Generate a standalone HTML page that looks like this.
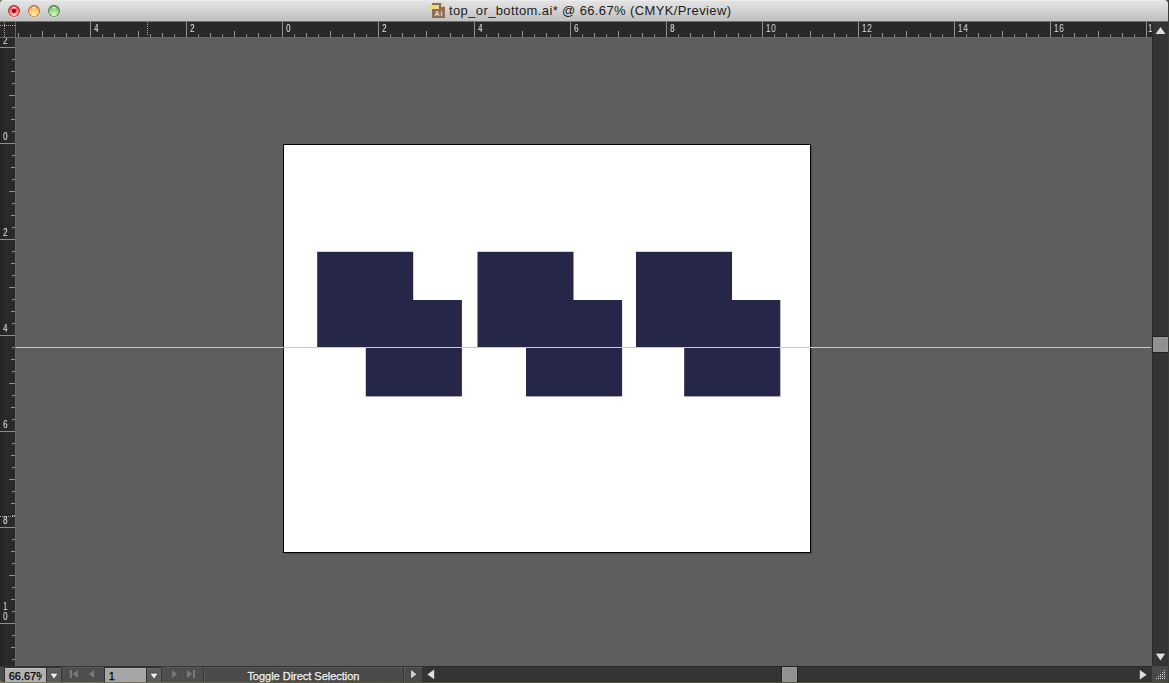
<!DOCTYPE html>
<html><head><meta charset="utf-8"><title>top_or_bottom.ai</title>
<style>
html,body{margin:0;padding:0;}
body{width:1169px;height:683px;overflow:hidden;position:relative;background:linear-gradient(90deg,#7a7a5e 0,#66654c 200px,#555340 430px,#555340 1167px,#3e3e34 1168px);font-family:"Liberation Sans",sans-serif;}
#win{position:absolute;left:0;top:0;width:1168px;height:682px;overflow:hidden;border-radius:4px 4px 4px 4px;background:#5e5e5e;}
#win div,#win span,#win svg{position:absolute;}
#title{left:0;top:0;width:1168px;height:21px;background:linear-gradient(#f2f2f2 0,#e3e3e3 1px,#d7d7d7 9px,#c9c9c9 15px,#c1c1c1 20px,#c6c6c6 21px);border-bottom:1px solid #6e6e6e;}
.tl{width:12px;height:12px;border-radius:50%;top:5px;box-sizing:border-box;}
#ttext{left:449px;top:3px;height:16px;line-height:16px;font-size:13px;color:#1c1c1c;white-space:nowrap;letter-spacing:0.38px;}
#hruler{left:0;top:22px;width:1152px;height:15px;background:#292929;overflow:hidden;}
#hline{left:0;top:37px;width:1152px;height:1px;background:#686868;}
#vruler{left:0;top:38px;width:15px;height:628px;background:linear-gradient(90deg,#242424 0,#292929 5px);overflow:hidden;}
#vline{left:15px;top:22px;width:1px;height:644px;background:#686868;}
.hl,.vl{color:#e4e4e4;font-size:10.5px;line-height:10px;height:10px;transform-origin:0 0;transform:scaleX(.78);will-change:transform;letter-spacing:1px;}
.hl{top:1px;}
.vl{left:2.7px;}
#canvas{left:16px;top:38px;width:1136px;height:628px;background:#5e5e5e;overflow:hidden;}
#art{left:267px;top:106px;width:526px;height:407px;background:#fff;border:1px solid #000;box-shadow:1px 1px 0 #4e4e4e,2px 2px 0 #595959;}
#guide{left:0;top:309px;width:1135px;height:1px;background:#4cfcff;}
#vsb{left:1153px;top:22px;width:15px;height:644px;background:#343434;box-shadow:-1px 0 0 #2a2a2a;}
#hsb{left:422px;top:667px;width:730px;height:15px;background:#343434;box-shadow:0 -1px 0 #2a2a2a,inset 0 -1px 0 #2e2e2e;}
#bar{left:0;top:666px;width:422px;height:16px;background:linear-gradient(#333 0,#333 1px,#4a4a4a 1px);}
.thumb{background:#919191;box-sizing:border-box;border:1px solid #989898;box-shadow:0 0 0 1px #222;}
.fld{top:2px;height:14px;background:linear-gradient(#c2c2c2 0,#c2c2c2 1px,#b2b2b2 1px,#b0b0b0);box-shadow:0 0 0 1px #303030;}
.fld i{position:absolute;display:block;font-style:normal;left:0;top:0;width:36.5px;height:14px;overflow:hidden;}
.fld span{left:3.7px;top:2px;font-size:11px;line-height:12px;color:#000;-webkit-text-stroke:0.25px #000;white-space:nowrap;}
.dd{top:2px;height:14px;width:14px;background:#5c5c5c;box-shadow:inset 0 1px 0 #686868,0 0 0 1px #303030;}
.nav{top:1px;height:15px;background:#4e4e4e;box-shadow:inset 0 1px 0 #585858,0 0 0 1px #383838;}
#status{left:205px;top:1px;width:198px;height:15px;}
#status span{left:42.4px;top:3px;font-size:11px;line-height:12px;color:#f0f0f0;white-space:nowrap;text-shadow:0 -1px 0 #222;letter-spacing:-0.02px;-webkit-text-stroke:0.3px #f0f0f0;}
#grip{left:1152px;top:666px;width:16px;height:16px;background:#4a4a4a;}
</style></head><body>
<div id="win">
 <div id="title">
  <div class="tl" style="left:8px;background:radial-gradient(ellipse 3.6px 1.6px at 50% 22%,rgba(255,255,255,.8),rgba(255,255,255,0)),radial-gradient(circle at 50% 80%,#ffd4d4 0,#ff8c8c 32%,#fa5a5a 58%,#d84444 90%);box-shadow:inset 0 0 0 .8px #a83434,inset 0 1px 1px #7c1c1c,0 .6px .8px rgba(255,255,255,.7);"></div>
  <div style="left:12px;top:9px;width:4px;height:4px;border-radius:50%;background:#a00808;box-shadow:0 0 1px #c01010;"></div>
  <div class="tl" style="left:28px;background:radial-gradient(ellipse 3.6px 1.6px at 50% 22%,rgba(255,255,255,.8),rgba(255,255,255,0)),radial-gradient(circle at 50% 80%,#fff0b4 0,#fdd47c 32%,#f6b45c 58%,#dc9844 90%);box-shadow:inset 0 0 0 .8px #a8702a,inset 0 1px 1px #7c4c14,0 .6px .8px rgba(255,255,255,.7);"></div>
  <div class="tl" style="left:48px;background:radial-gradient(ellipse 3.6px 1.6px at 50% 22%,rgba(255,255,255,.8),rgba(255,255,255,0)),radial-gradient(circle at 50% 80%,#d8f4c4 0,#acde98 32%,#86c876 58%,#68aa5a 90%);box-shadow:inset 0 0 0 .8px #447e3a,inset 0 1px 1px #28581e,0 .6px .8px rgba(255,255,255,.7);"></div>
  <svg style="left:429px;top:3px" width="17" height="16" viewBox="0 0 17 16">
   <path d="M3 0h9l4 4v11H3z" fill="#8b6e5c"/>
   <path d="M12 0l4 4h-4z" fill="#ead09a"/>
   <rect x="0" y="2" width="10" height="4" fill="#f1d87e"/>
   <text x="5.5" y="13" font-family="Liberation Sans, sans-serif" font-size="7" font-weight="bold" letter-spacing="0.9" fill="#f5dfa8">Ai</text>
  </svg>
  <span id="ttext">top_or_bottom.ai* @ 66.67% (CMYK/Preview)</span>
 </div>
 <div id="hruler">
  <svg width="1152" height="15" style="left:0;top:0" fill="#8e8e8e" shape-rendering="crispEdges"><rect x="18" y="11" width="1" height="4"/><rect x="30" y="12" width="1" height="3"/><rect x="42" y="9" width="1" height="6"/><rect x="54" y="12" width="1" height="3"/><rect x="66" y="11" width="1" height="4"/><rect x="78" y="12" width="1" height="3"/><rect x="90" y="0" width="1" height="15"/><rect x="102" y="12" width="1" height="3"/><rect x="114" y="11" width="1" height="4"/><rect x="126" y="12" width="1" height="3"/><rect x="138" y="9" width="1" height="6"/><rect x="150" y="12" width="1" height="3"/><rect x="162" y="11" width="1" height="4"/><rect x="174" y="12" width="1" height="3"/><rect x="186" y="0" width="1" height="15"/><rect x="198" y="12" width="1" height="3"/><rect x="210" y="11" width="1" height="4"/><rect x="222" y="12" width="1" height="3"/><rect x="234" y="9" width="1" height="6"/><rect x="246" y="12" width="1" height="3"/><rect x="258" y="11" width="1" height="4"/><rect x="270" y="12" width="1" height="3"/><rect x="282" y="0" width="1" height="15"/><rect x="294" y="12" width="1" height="3"/><rect x="306" y="11" width="1" height="4"/><rect x="318" y="12" width="1" height="3"/><rect x="330" y="9" width="1" height="6"/><rect x="342" y="12" width="1" height="3"/><rect x="354" y="11" width="1" height="4"/><rect x="366" y="12" width="1" height="3"/><rect x="378" y="0" width="1" height="15"/><rect x="390" y="12" width="1" height="3"/><rect x="402" y="11" width="1" height="4"/><rect x="414" y="12" width="1" height="3"/><rect x="426" y="9" width="1" height="6"/><rect x="438" y="12" width="1" height="3"/><rect x="450" y="11" width="1" height="4"/><rect x="462" y="12" width="1" height="3"/><rect x="474" y="0" width="1" height="15"/><rect x="486" y="12" width="1" height="3"/><rect x="498" y="11" width="1" height="4"/><rect x="510" y="12" width="1" height="3"/><rect x="522" y="9" width="1" height="6"/><rect x="534" y="12" width="1" height="3"/><rect x="546" y="11" width="1" height="4"/><rect x="558" y="12" width="1" height="3"/><rect x="570" y="0" width="1" height="15"/><rect x="582" y="12" width="1" height="3"/><rect x="594" y="11" width="1" height="4"/><rect x="606" y="12" width="1" height="3"/><rect x="618" y="9" width="1" height="6"/><rect x="630" y="12" width="1" height="3"/><rect x="642" y="11" width="1" height="4"/><rect x="654" y="12" width="1" height="3"/><rect x="666" y="0" width="1" height="15"/><rect x="678" y="12" width="1" height="3"/><rect x="690" y="11" width="1" height="4"/><rect x="702" y="12" width="1" height="3"/><rect x="714" y="9" width="1" height="6"/><rect x="726" y="12" width="1" height="3"/><rect x="738" y="11" width="1" height="4"/><rect x="750" y="12" width="1" height="3"/><rect x="762" y="0" width="1" height="15"/><rect x="774" y="12" width="1" height="3"/><rect x="786" y="11" width="1" height="4"/><rect x="798" y="12" width="1" height="3"/><rect x="810" y="9" width="1" height="6"/><rect x="822" y="12" width="1" height="3"/><rect x="834" y="11" width="1" height="4"/><rect x="846" y="12" width="1" height="3"/><rect x="858" y="0" width="1" height="15"/><rect x="870" y="12" width="1" height="3"/><rect x="882" y="11" width="1" height="4"/><rect x="894" y="12" width="1" height="3"/><rect x="906" y="9" width="1" height="6"/><rect x="918" y="12" width="1" height="3"/><rect x="930" y="11" width="1" height="4"/><rect x="942" y="12" width="1" height="3"/><rect x="954" y="0" width="1" height="15"/><rect x="966" y="12" width="1" height="3"/><rect x="978" y="11" width="1" height="4"/><rect x="990" y="12" width="1" height="3"/><rect x="1002" y="9" width="1" height="6"/><rect x="1014" y="12" width="1" height="3"/><rect x="1026" y="11" width="1" height="4"/><rect x="1038" y="12" width="1" height="3"/><rect x="1050" y="0" width="1" height="15"/><rect x="1062" y="12" width="1" height="3"/><rect x="1074" y="11" width="1" height="4"/><rect x="1086" y="12" width="1" height="3"/><rect x="1098" y="9" width="1" height="6"/><rect x="1110" y="12" width="1" height="3"/><rect x="1122" y="11" width="1" height="4"/><rect x="1134" y="12" width="1" height="3"/><rect x="1146" y="0" width="1" height="15"/><rect x="15" y="0" width="1" height="15" fill="#777"/><g fill="#ababab"><rect x="147" y="0" width="1" height="1"/><rect x="147" y="2" width="1" height="1"/><rect x="147" y="4" width="1" height="1"/><rect x="147" y="6" width="1" height="1"/><rect x="147" y="8" width="1" height="1"/><rect x="147" y="10" width="1" height="1"/><rect x="147" y="12" width="1" height="1"/><rect x="4" y="0" width="1" height="1"/><rect x="4" y="2" width="1" height="1"/><rect x="4" y="4" width="1" height="1"/><rect x="4" y="6" width="1" height="1"/><rect x="4" y="8" width="1" height="1"/><rect x="4" y="10" width="1" height="1"/><rect x="4" y="12" width="1" height="1"/><rect x="4" y="14" width="1" height="1"/><rect x="0" y="3" width="1" height="1"/><rect x="2" y="3" width="1" height="1"/><rect x="4" y="3" width="1" height="1"/><rect x="6" y="3" width="1" height="1"/><rect x="8" y="3" width="1" height="1"/><rect x="10" y="3" width="1" height="1"/><rect x="12" y="3" width="1" height="1"/><rect x="14" y="3" width="1" height="1"/></g></svg>
  <span class="hl" style="left:93.6px">4</span><span class="hl" style="left:189.6px">2</span><span class="hl" style="left:285.6px">0</span><span class="hl" style="left:381.6px">2</span><span class="hl" style="left:477.6px">4</span><span class="hl" style="left:573.6px">6</span><span class="hl" style="left:669.6px">8</span><span class="hl" style="left:765.6px">10</span><span class="hl" style="left:861.6px">12</span><span class="hl" style="left:957.6px">14</span><span class="hl" style="left:1053.6px">16</span><span class="hl" style="left:1148.2px">18</span>
 </div>
 <div id="vruler">
  <svg width="15" height="628" style="left:0;top:0" fill="#8e8e8e" shape-rendering="crispEdges"><rect x="0" y="9" width="15" height="1"/><rect x="12" y="21" width="3" height="1"/><rect x="11" y="33" width="4" height="1"/><rect x="12" y="45" width="3" height="1"/><rect x="9" y="57" width="6" height="1"/><rect x="12" y="69" width="3" height="1"/><rect x="11" y="81" width="4" height="1"/><rect x="12" y="93" width="3" height="1"/><rect x="0" y="105" width="15" height="1"/><rect x="12" y="117" width="3" height="1"/><rect x="11" y="129" width="4" height="1"/><rect x="12" y="141" width="3" height="1"/><rect x="9" y="153" width="6" height="1"/><rect x="12" y="165" width="3" height="1"/><rect x="11" y="177" width="4" height="1"/><rect x="12" y="189" width="3" height="1"/><rect x="0" y="201" width="15" height="1"/><rect x="12" y="213" width="3" height="1"/><rect x="11" y="225" width="4" height="1"/><rect x="12" y="237" width="3" height="1"/><rect x="9" y="249" width="6" height="1"/><rect x="12" y="261" width="3" height="1"/><rect x="11" y="273" width="4" height="1"/><rect x="12" y="285" width="3" height="1"/><rect x="0" y="297" width="15" height="1"/><rect x="12" y="309" width="3" height="1"/><rect x="11" y="321" width="4" height="1"/><rect x="12" y="333" width="3" height="1"/><rect x="9" y="345" width="6" height="1"/><rect x="12" y="357" width="3" height="1"/><rect x="11" y="369" width="4" height="1"/><rect x="12" y="381" width="3" height="1"/><rect x="0" y="393" width="15" height="1"/><rect x="12" y="405" width="3" height="1"/><rect x="11" y="417" width="4" height="1"/><rect x="12" y="429" width="3" height="1"/><rect x="9" y="441" width="6" height="1"/><rect x="12" y="453" width="3" height="1"/><rect x="11" y="465" width="4" height="1"/><rect x="12" y="477" width="3" height="1"/><rect x="0" y="489" width="15" height="1"/><rect x="12" y="501" width="3" height="1"/><rect x="11" y="513" width="4" height="1"/><rect x="12" y="525" width="3" height="1"/><rect x="9" y="537" width="6" height="1"/><rect x="12" y="549" width="3" height="1"/><rect x="11" y="561" width="4" height="1"/><rect x="12" y="573" width="3" height="1"/><rect x="0" y="585" width="15" height="1"/><rect x="12" y="597" width="3" height="1"/><rect x="11" y="609" width="4" height="1"/><rect x="12" y="621" width="3" height="1"/><g fill="#ababab"><rect x="0" y="478" width="1" height="1"/><rect x="2" y="478" width="1" height="1"/><rect x="4" y="478" width="1" height="1"/><rect x="6" y="478" width="1" height="1"/><rect x="8" y="478" width="1" height="1"/><rect x="10" y="478" width="1" height="1"/><rect x="12" y="478" width="1" height="1"/><rect x="14" y="478" width="1" height="1"/></g></svg>
  <span class="vl" style="top:-3px">2</span><span class="vl" style="top:93px">0</span><span class="vl" style="top:189px">2</span><span class="vl" style="top:285px">4</span><span class="vl" style="top:381px">6</span><span class="vl" style="top:477px">8</span><span class="vl" style="top:563px">1</span><span class="vl" style="top:573px">0</span>
 </div>
 <div id="hline"></div><div id="vline"></div>
 <div id="canvas">
  <div id="art"></div>
  <svg style="left:0;top:0" width="1136" height="628" viewBox="16 38 1136 628" fill="#262649">
   <rect x="317.2" y="251.8" width="96" height="95.4"/><rect x="365.8" y="300" width="96.1" height="96.4"/>
   <rect x="477.5" y="251.8" width="96" height="95.4"/><rect x="526" y="300" width="96.1" height="96.4"/>
   <rect x="636" y="251.8" width="96" height="95.4"/><rect x="684.2" y="300" width="96.1" height="96.4"/>
  </svg>
  <div id="guide"></div>
 </div>
 <div id="vsb">
  <svg style="left:0;top:0" width="15" height="644"><path d="M2.6 12L7.5 5.1L12.4 12z" fill="#dedede"/><rect x="2.6" y="630.6" width="9.8" height="1" fill="#111"/><path d="M2.8 631.6h9.4L7.5 638.4z" fill="#dedede"/></svg>
  <div class="thumb" style="left:0;top:315px;width:15px;height:15px;"></div>
 </div>
 <div id="bar">
  <div class="fld" style="left:5px;width:41px;"><i><span>66.67%</span></i></div>
  <div class="dd" style="left:47px;"><svg width="14" height="14" style="left:0;top:0"><rect x="3.5" y="4.9" width="7" height="0.8" fill="#1a1a1a"/><path d="M3.5 5.5h7L7 10.5z" fill="#f2f2f2"/></svg></div>
  <div class="nav" style="left:62px;width:42px;"><svg width="42" height="15" style="left:0;top:0" fill="#787878"><rect x="7.9" y="3" width="2.1" height="8"/><path d="M16 3v8L10.5 7z"/><path d="M32.1 3v8L26.7 7z"/></svg></div>
  <div class="fld" style="left:105px;width:41px;background:linear-gradient(#b4b4b4 0,#b4b4b4 1px,#a6a6a6 1px,#a6a6a6);"><i><span>1</span></i></div>
  <div class="dd" style="left:147px;"><svg width="14" height="14" style="left:0;top:0"><rect x="3.5" y="4.9" width="7" height="0.8" fill="#1a1a1a"/><path d="M3.5 5.5h7L7 10.5z" fill="#f2f2f2"/></svg></div>
  <div class="nav" style="left:162px;width:41px;"><svg width="42" height="15" style="left:0;top:0" fill="#787878"><path d="M10 3v8L15.2 7z"/><path d="M25 3v8L30.4 7z"/><rect x="31" y="3" width="2.1" height="8"/></svg></div>
  <div style="left:204px;top:1px;width:1px;height:15px;background:#5a5a5a"></div>
  <div style="left:204px;top:1px;width:199px;height:1px;background:#585858"></div>
  <div id="status"><span>Toggle Direct Selection</span></div>
  <div style="left:403px;top:1px;width:1px;height:15px;background:#353535"></div>
  <div style="left:404px;top:1px;width:1px;height:15px;background:#5a5a5a"></div>
  <div style="left:404px;top:1px;width:18px;height:1px;background:#585858"></div>
  <svg style="left:404px;top:1px" width="18" height="15"><path d="M7 3v8.3L12.5 7.15z" fill="#cfcfcf"/></svg>
 </div>
 <div id="hsb">
  <svg style="left:0;top:0" width="730" height="15"><path d="M12.2 2.6v9.6L5.4 7.4z" fill="#e0e0e0"/><path d="M717.8 3v9.4L724.6 7.7z" fill="#e0e0e0"/></svg>
  <div class="thumb" style="left:360px;top:0;width:15px;height:15px;"></div>
 </div>
 <div id="grip"><svg width="16" height="16" style="left:0;top:0" fill="#dcdcdc" shape-rendering="crispEdges"><rect x="12" y="4" width="1" height="1"/><rect x="12" y="6" width="1" height="1"/><rect x="10" y="6" width="1" height="1"/><rect x="12" y="8" width="1" height="1"/><rect x="10" y="8" width="1" height="1"/><rect x="8" y="8" width="1" height="1"/><rect x="12" y="10" width="1" height="1"/><rect x="10" y="10" width="1" height="1"/><rect x="8" y="10" width="1" height="1"/><rect x="6" y="10" width="1" height="1"/><rect x="12" y="12" width="1" height="1"/><rect x="10" y="12" width="1" height="1"/><rect x="8" y="12" width="1" height="1"/><rect x="6" y="12" width="1" height="1"/><rect x="4" y="12" width="1" height="1"/></svg></div>
</div>
</body></html>
